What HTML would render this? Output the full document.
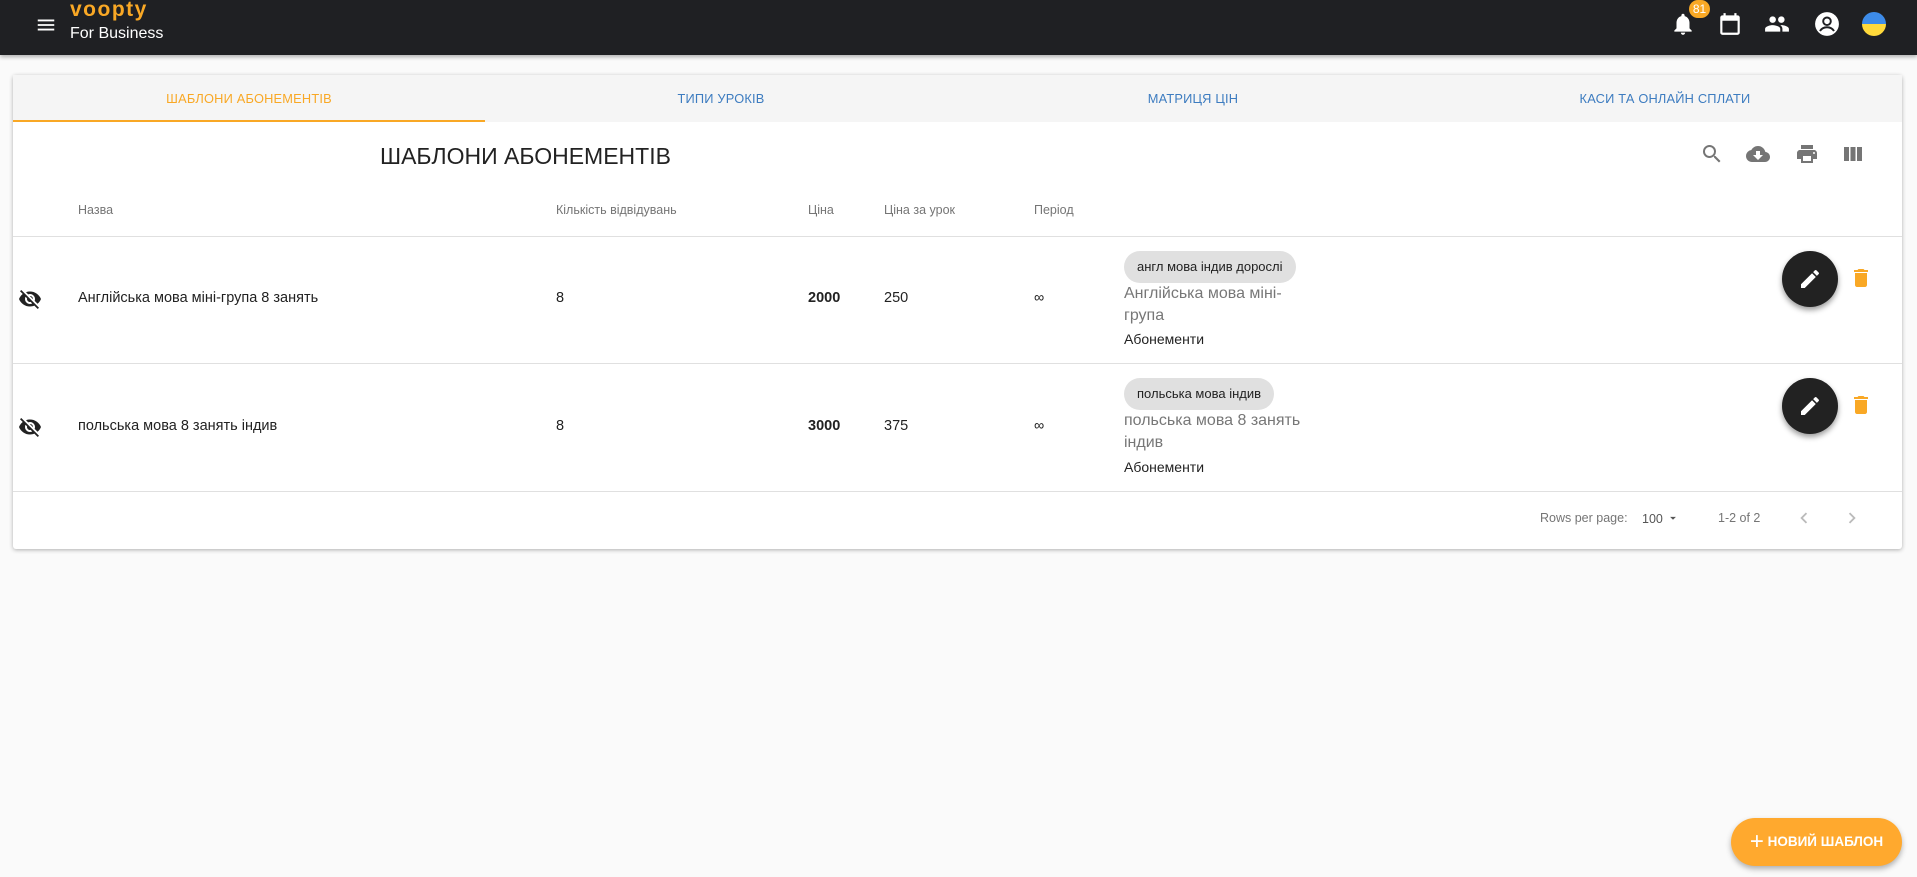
<!DOCTYPE html>
<html><head><meta charset="utf-8"><style>
*{box-sizing:border-box;margin:0;padding:0}
body{width:1917px;height:877px;background:#fafafa;font-family:"Liberation Sans",sans-serif;position:relative;overflow:hidden;color:#222}
.a{position:absolute}
.hdr{left:0;top:0;width:1917px;height:55px;background:#1f2023;box-shadow:0 2px 4px rgba(0,0,0,.3)}
.card{left:13px;top:75px;width:1889px;height:474px;background:#fff;box-shadow:0 1px 4px rgba(0,0,0,.3);border-radius:3px}
.tabs{left:0;top:0;width:1889px;height:47px;background:#f5f5f5}
.tab{top:0;width:472px;height:47px;line-height:47px;text-align:center;font-size:12.8px;color:#3d7cc0;letter-spacing:.2px}
.th{top:128px;font-size:12.5px;color:#757575}
.td{font-size:14.5px;color:#222}
.line{left:0;width:1889px;height:1px;background:#e0e0e0}
.chip{height:32px;line-height:32px;border-radius:16px;background:#e0e0e0;font-size:13px;padding:0 13px;color:#222}
.desc{font-size:16px;color:#777;line-height:22px}
.ab{font-size:14px;color:#222}
.fab{width:56px;height:56px;border-radius:50%;background:#222;box-shadow:0 3px 6px rgba(0,0,0,.4)}
.ft{font-size:12.5px;color:#757575}
</style></head><body>
<div class="a hdr">
 <svg class="a" style="left:35px;top:14px" width="22" height="22" viewBox="0 0 24 24"><path d="M3 6h18v2H3zm0 5h18v2H3zm0 5h18v2H3z" fill="#fff"/></svg>
 <div class="a" style="left:70px;top:-2px;font-size:21px;font-weight:bold;color:#f9a825;letter-spacing:1.5px">voopty</div>
 <div class="a" style="left:70px;top:25px;font-size:16px;color:#fff">For Business</div>
 <svg class="a" style="left:1670px;top:11px" width="26" height="26" viewBox="0 0 24 24"><path fill="#fff" d="M12 22c1.1 0 2-.9 2-2h-4c0 1.1.9 2 2 2zm6-6v-5c0-3.07-1.64-5.640-4.5-6.32V4c0-.83-.67-1.5-1.5-1.5s-1.5.67-1.5 1.5v.68C7.63 5.36 6 7.92 6 11v5l-2 2v1h16v-1l-2-2z"/></svg>
 <div class="a" style="left:1689px;top:0;width:21px;height:18px;border-radius:9px;background:#f9a825;color:#fff;font-size:12px;text-align:center;line-height:18px">81</div>
 <svg class="a" style="left:1717px;top:11px" width="26" height="26" viewBox="0 0 24 24"><path fill="#fff" d="M19 4h-1V2h-2v2H8V2H6v2H5c-1.1 0-2 .9-2 2v14c0 1.1.9 2 2 2h14c1.1 0 2-.9 2-2V6c0-1.1-.9-2-2-2zm0 16H5V9h14v11z"/></svg>
 <svg class="a" style="left:1764px;top:11px" width="26" height="26" viewBox="0 0 24 24"><path fill="#fff" d="M16 11c1.66 0 2.99-1.34 2.99-3S17.66 5 16 5c-1.66 0-3 1.34-3 3s1.34 3 3 3zm-8 0c1.66 0 2.99-1.34 2.99-3S9.66 5 8 5C6.34 5 5 6.34 5 8s1.34 3 3 3zm0 2c-2.33 0-7 1.17-7 3.5V19h14v-2.5c0-2.33-4.67-3.5-7-3.5zm8 0c-.29 0-.62.02-.97.05 1.16.84 1.97 1.97 1.97 3.45V19h6v-2.5c0-2.33-4.67-3.5-7-3.5z"/></svg>
 <svg class="a" style="left:1814px;top:11px" width="26" height="26" viewBox="0 0 24 24"><circle cx="12" cy="12" r="11" fill="#fff"/><circle cx="12" cy="9.5" r="3.5" fill="none" stroke="#1f2023" stroke-width="1.8"/><path d="M5.5 18.5c1.5-2.5 4-3.5 6.5-3.5s5 1 6.5 3.5" fill="none" stroke="#1f2023" stroke-width="1.8"/></svg>
 <div class="a" style="left:1862px;top:12px;width:24px;height:24px;border-radius:50%;background:linear-gradient(#3d8be8 50%,#ffd93b 50%)"></div>
</div>
<div class="a card">
 <div class="a tabs">
  <div class="a tab" style="left:0;color:#f9a825">ШАБЛОНИ АБОНЕМЕНТІВ</div>
  <div class="a tab" style="left:472px">ТИПИ УРОКІВ</div>
  <div class="a tab" style="left:944px">МАТРИЦЯ ЦІН</div>
  <div class="a tab" style="left:1416px">КАСИ ТА ОНЛАЙН СПЛАТИ</div>
  <div class="a" style="left:0;top:45px;width:472px;height:2px;background:#f9a825"></div>
 </div>
 <div class="a" style="left:367px;top:68px;font-size:23px;color:#222">ШАБЛОНИ АБОНЕМЕНТІВ</div>
 <svg class="a" style="left:1687px;top:67px" width="24" height="24" viewBox="0 0 24 24"><path fill="#757575" d="M15.5 14h-.79l-.28-.27A6.47 6.47 0 0016 9.5 6.5 6.5 0 109.5 16c1.61 0 3.09-.59 4.23-1.57l.27.28v.79l5 4.99L20.49 19l-4.99-5zm-6 0C7.01 14 5 11.99 5 9.5S7.01 5 9.5 5 14 7.01 14 9.5 11.99 14 9.5 14z"/></svg>
 <svg class="a" style="left:1733px;top:67px" width="24" height="24" viewBox="0 0 24 24"><path fill="#757575" d="M19.35 10.04A7.49 7.49 0 0012 4C9.11 4 6.6 5.64 5.35 8.04A5.994 5.994 0 000 14c0 3.31 2.69 6 6 6h13c2.76 0 5-2.24 5-5 0-2.64-2.05-4.78-4.65-4.96zM17 13l-5 5-5-5h3V9h4v4h3z"/></svg>
 <svg class="a" style="left:1782px;top:67px" width="24" height="24" viewBox="0 0 24 24"><path fill="#757575" d="M19 8H5c-1.66 0-3 1.34-3 3v6h4v4h12v-4h4v-6c0-1.66-1.34-3-3-3zm-3 11H8v-5h8v5zm3-7c-.55 0-1-.45-1-1s.45-1 1-1 1 .45 1 1-.45 1-1 1zm-1-9H6v4h12V3z"/></svg>
 <svg class="a" style="left:1828px;top:67px" width="24" height="24" viewBox="0 0 24 24"><path fill="#757575" d="M3 5h5v14H3zm6.5 0h5v14h-5zM16 5h5v14h-5z"/></svg>
 <div class="a th" style="left:65px">Назва</div>
 <div class="a th" style="left:543px">Кількість відвідувань</div>
 <div class="a th" style="left:795px">Ціна</div>
 <div class="a th" style="left:871px">Ціна за урок</div>
 <div class="a th" style="left:1021px">Період</div>
 <div class="a line" style="top:161px"></div>
 <svg class="a" style="left:5px;top:212px" width="24" height="24" viewBox="0 0 24 24"><path fill="#222" d="M12 7c2.76 0 5 2.24 5 5 0 .65-.13 1.26-.36 1.83l2.92 2.92c1.51-1.26 2.7-2.89 3.43-4.75-1.73-4.39-6-7.5-11-7.5-1.4 0-2.74.25-3.98.7l2.16 2.16C10.74 7.13 11.35 7 12 7zM2 4.27l2.28 2.28.46.46A11.8 11.8 0 001 12c1.73 4.39 6 7.5 11 7.5 1.55 0 3.03-.3 4.38-.84l.42.42L19.73 22 21 20.73 3.27 3 2 4.27zM7.53 9.8l1.55 1.55c-.05.21-.08.43-.08.65 0 1.66 1.34 3 3 3 .22 0 .44-.03.65-.08l1.55 1.55c-.67.33-1.41.53-2.2.53-2.76 0-5-2.24-5-5 0-.79.2-1.53.53-2.2zm4.31-.78l3.15 3.15.02-.16c0-1.66-1.34-3-3-3l-.17.01z"/></svg>
 <div class="a td" style="left:65px;top:215px">Англійська мова міні-група 8 занять</div>
 <div class="a td" style="left:543px;top:215px">8</div>
 <div class="a td" style="left:795px;top:215px;font-weight:bold">2000</div>
 <div class="a td" style="left:871px;top:215px">250</div>
 <div class="a td" style="left:1021px;top:215px">∞</div>
 <div class="a chip" style="left:1111px;top:176px">англ мова індив дорослі</div>
 <div class="a desc" style="left:1111px;top:208px">Англійська мова міні-<br>група</div>
 <div class="a ab" style="left:1111px;top:256px">Абонементи</div>
 <div class="a fab" style="left:1769px;top:176px"><svg style="margin:16px" width="24" height="24" viewBox="0 0 24 24"><path fill="#fff" d="M3 17.25V21h3.75L17.81 9.94l-3.75-3.75L3 17.25zM20.71 7.04a1 1 0 000-1.41l-2.34-2.34a1 1 0 00-1.41 0l-1.83 1.83 3.75 3.75 1.83-1.83z"/></svg></div>
 <svg class="a" style="left:1836px;top:191px" width="24" height="24" viewBox="0 0 24 24"><path fill="#f9a825" d="M6 19c0 1.1.9 2 2 2h8c1.1 0 2-.9 2-2V7H6v12zM19 4h-3.5l-1-1h-5l-1 1H5v2h14V4z"/></svg>
 <div class="a line" style="top:288px"></div>
 <svg class="a" style="left:5px;top:340px" width="24" height="24" viewBox="0 0 24 24"><path fill="#222" d="M12 7c2.76 0 5 2.24 5 5 0 .65-.13 1.26-.36 1.83l2.92 2.92c1.51-1.26 2.7-2.89 3.43-4.75-1.73-4.39-6-7.5-11-7.5-1.4 0-2.74.25-3.98.7l2.16 2.16C10.74 7.13 11.35 7 12 7zM2 4.27l2.28 2.28.46.46A11.8 11.8 0 001 12c1.73 4.39 6 7.5 11 7.5 1.55 0 3.03-.3 4.38-.84l.42.42L19.73 22 21 20.73 3.27 3 2 4.27zM7.53 9.8l1.55 1.55c-.05.21-.08.43-.08.65 0 1.66 1.34 3 3 3 .22 0 .44-.03.65-.08l1.55 1.55c-.67.33-1.41.53-2.2.53-2.76 0-5-2.24-5-5 0-.79.2-1.53.53-2.2zm4.31-.78l3.15 3.15.02-.16c0-1.66-1.34-3-3-3l-.17.01z"/></svg>
 <div class="a td" style="left:65px;top:343px">польська мова 8 занять індив</div>
 <div class="a td" style="left:543px;top:343px">8</div>
 <div class="a td" style="left:795px;top:343px;font-weight:bold">3000</div>
 <div class="a td" style="left:871px;top:343px">375</div>
 <div class="a td" style="left:1021px;top:343px">∞</div>
 <div class="a chip" style="left:1111px;top:303px">польська мова індив</div>
 <div class="a desc" style="left:1111px;top:335px">польська мова 8 занять<br>індив</div>
 <div class="a ab" style="left:1111px;top:384px">Абонементи</div>
 <div class="a fab" style="left:1769px;top:303px"><svg style="margin:16px" width="24" height="24" viewBox="0 0 24 24"><path fill="#fff" d="M3 17.25V21h3.75L17.81 9.94l-3.75-3.75L3 17.25zM20.71 7.04a1 1 0 000-1.41l-2.34-2.34a1 1 0 00-1.41 0l-1.83 1.83 3.75 3.75 1.83-1.83z"/></svg></div>
 <svg class="a" style="left:1836px;top:318px" width="24" height="24" viewBox="0 0 24 24"><path fill="#f9a825" d="M6 19c0 1.1.9 2 2 2h8c1.1 0 2-.9 2-2V7H6v12zM19 4h-3.5l-1-1h-5l-1 1H5v2h14V4z"/></svg>
 <div class="a line" style="top:416px"></div>
 <div class="a ft" style="left:1527px;top:436px">Rows per page:</div>
 <div class="a ft" style="left:1629px;top:437px;color:#555">100</div>
 <svg class="a" style="left:1653px;top:436px" width="14" height="14" viewBox="0 0 24 24"><path fill="#555" d="M7 10l5 5 5-5z"/></svg>
 <div class="a ft" style="left:1705px;top:436px">1-2 of 2</div>
 <svg class="a" style="left:1780px;top:432px" width="22" height="22" viewBox="0 0 24 24"><path fill="#bbb" d="M15.41 7.41L14 6l-6 6 6 6 1.41-1.41L10.83 12z"/></svg>
 <svg class="a" style="left:1828px;top:432px" width="22" height="22" viewBox="0 0 24 24"><path fill="#bbb" d="M10 6L8.59 7.41 13.17 12l-4.58 4.59L10 18l6-6z"/></svg>
</div>
<div class="a" style="left:1731px;top:818px;width:171px;height:48px;border-radius:24px;background:#ffa92e;box-shadow:0 3px 6px rgba(0,0,0,.3);color:#fff;font-size:13.5px;font-weight:bold;line-height:48px;text-align:center"><span style="font-size:24px;font-weight:normal;vertical-align:-3px">+</span> НОВИЙ ШАБЛОН</div>
</body></html>
